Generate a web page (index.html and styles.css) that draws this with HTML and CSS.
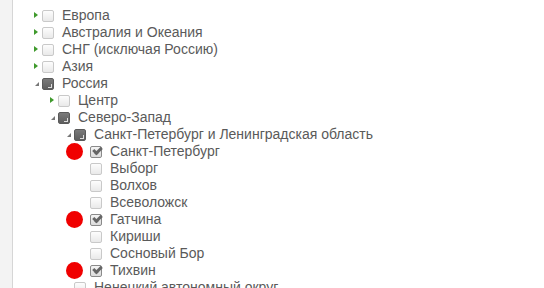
FILE: index.html
```html
<!DOCTYPE html>
<html>
<head>
<meta charset="utf-8">
<link rel="stylesheet" href="styles.css">
</head>
<body>
<div class="page">
  <div class="side"></div>
  <div class="tree">
    <ul class="lvl">
      <li><div class="row"><span class="tg closed"></span><span class="cb"></span><span class="lbl">Европа</span></div></li>
      <li><div class="row"><span class="tg closed"></span><span class="cb"></span><span class="lbl">Австралия и Океания</span></div></li>
      <li><div class="row"><span class="tg closed"></span><span class="cb"></span><span class="lbl">СНГ (исключая Россию)</span></div></li>
      <li><div class="row"><span class="tg closed"></span><span class="cb"></span><span class="lbl">Азия</span></div></li>
      <li><div class="row"><span class="tg open"></span><span class="cb part"></span><span class="lbl">Россия</span></div>
        <ul class="lvl sub">
          <li><div class="row"><span class="tg closed"></span><span class="cb"></span><span class="lbl">Центр</span></div></li>
          <li><div class="row"><span class="tg open"></span><span class="cb part"></span><span class="lbl">Северо-Запад</span></div>
            <ul class="lvl sub">
              <li><div class="row"><span class="tg open"></span><span class="cb part"></span><span class="lbl">Санкт-Петербург и Ленинградская область</span></div>
                <ul class="lvl sub">
                  <li><div class="row"><span class="dot"></span><span class="tg"></span><span class="cb on"></span><span class="lbl">Санкт-Петербург</span></div></li>
                  <li><div class="row"><span class="tg"></span><span class="cb"></span><span class="lbl">Выборг</span></div></li>
                  <li><div class="row"><span class="tg"></span><span class="cb"></span><span class="lbl">Волхов</span></div></li>
                  <li><div class="row"><span class="tg"></span><span class="cb"></span><span class="lbl">Всеволожск</span></div></li>
                  <li><div class="row"><span class="dot"></span><span class="tg"></span><span class="cb on"></span><span class="lbl">Гатчина</span></div></li>
                  <li><div class="row"><span class="tg"></span><span class="cb"></span><span class="lbl">Кириши</span></div></li>
                  <li><div class="row"><span class="tg"></span><span class="cb"></span><span class="lbl">Сосновый Бор</span></div></li>
                  <li><div class="row"><span class="dot"></span><span class="tg"></span><span class="cb on"></span><span class="lbl">Тихвин</span></div></li>
                </ul>
              </li>
              <li><div class="row"><span class="tg"></span><span class="cb"></span><span class="lbl">Ненецкий автономный округ</span></div></li>
            </ul>
          </li>
        </ul>
      </li>
    </ul>
  </div>
</div>
</body>
</html>
```

FILE: styles.css
```css
html, body {
  margin: 0;
  padding: 0;
  background: #fff;
  overflow: hidden;
}
.page {
  display: flex;
  height: 288px;
}
.side {
  width: 12px;
  flex: none;
  background: #f3f3f3;
  border-right: 1px solid #d6d6d6;
}
.tree {
  padding: 7px 0 0 19px;
  font-family: "Liberation Sans", Arial, sans-serif;
  font-size: 14px;
  color: #5a5a5a;
}
.lvl {
  list-style: none;
  margin: 0;
  padding: 0;
}
.sub {
  padding-left: 16px;
}
.row {
  position: relative;
  display: flex;
  align-items: center;
  height: 17px;
  white-space: nowrap;
}
.tg {
  width: 10px;
  height: 17px;
  flex: none;
  position: relative;
}
.tg.closed::after {
  content: "";
  position: absolute;
  left: 2px;
  top: 5px;
  border-left: 4px solid #3f9a2c;
  border-top: 3.5px solid transparent;
  border-bottom: 3.5px solid transparent;
}
.tg.open::after {
  content: "";
  position: absolute;
  left: 3px;
  top: 7px;
  border-right: 4px solid #777;
  border-top: 4px solid transparent;
}
.cb {
  width: 10px;
  height: 10px;
  flex: none;
  border: 1px solid #c9c9c9;
  border-radius: 2px;
  background: linear-gradient(#fdfdfd, #e9e9e9);
  position: relative;
  box-sizing: content-box;
}
.cb.part {
  background: linear-gradient(#7a7a7a, #5e5e5e);
  border-color: #5a5a5a;
}
.cb.part::after {
  content: "";
  position: absolute;
  right: 1px;
  bottom: 1px;
  width: 3px;
  height: 3px;
  border-right: 1px solid #ddd;
  border-bottom: 1px solid #ddd;
}
.cb.on {
  background: linear-gradient(#f4f4f4, #dcdcdc);
  border-color: #8a8a8a;
}
.cb.on::after {
  content: "";
  position: absolute;
  left: 2px;
  top: 0px;
  width: 6px;
  height: 3px;
  border-left: 3px solid #666;
  border-bottom: 3px solid #666;
  transform: rotate(-45deg);
}
.lbl {
  margin-left: 8px;
  line-height: 17px;
}
.dot {
  position: absolute;
  left: -14px;
  top: 0;
  width: 17px;
  height: 17px;
  border-radius: 50%;
  background: #f00000;
}
```
